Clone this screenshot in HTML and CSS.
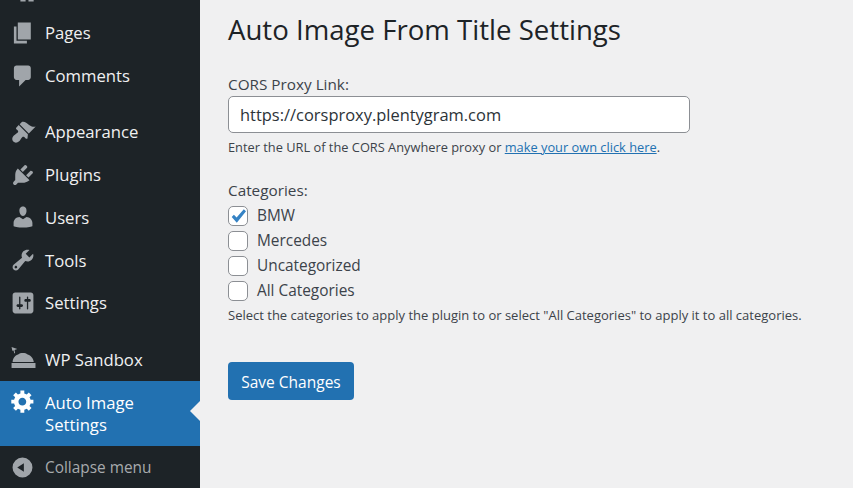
FILE: index.html
```html
<!DOCTYPE html>
<html lang="en">
<head>
    <meta charset="UTF-8">
    <meta name="viewport" content="width=device-width, initial-scale=1.0">
    <link rel="stylesheet" href="styles.css">
    <title>Auto Image From Title Settings</title>
</head>
<body>
    <nav class="sidebar">
        <ul class="menu">
            <li class="item">
                <svg class="icon" viewBox="0 0 20 20"><path d="M8 14h4v4.800H8zM14.200 14h4v4.800h-4z"/></svg>
            </li>
            <li class="item">
                <svg class="icon" viewBox="0 0 20 20"><path d="M6 15V2h10v13H6zm-1 1h8v2H3V5h2v11z"/></svg>
                <span>Pages</span>
            </li>
            <li class="item">
                <svg class="icon" viewBox="0 0 20 20"><path d="M5 2h9c1.100 0 2 .9 2 2v7c0 1.100-.9 2-2 2h-2l-5 5v-5H5c-1.100 0-2-.9-2-2V4c0-1.100.9-2 2-2z"/></svg>
                <span>Comments</span>
            </li>
        </ul>
        <ul class="menu">
            <li class="item">
                <svg class="icon" viewBox="0 0 20 20"><path d="M14.480 11.060L7.410 3.990l1.500-1.500c.5-.56 2.300-.47 3.510.32 1.210.8 1.430 1.280 2.910 2.100 1.180.64 2.450 1.260 4.450.85zm-.71.71L6.700 4.700 4.930 6.470c-.39.39-.39 1.020 0 1.410l1.060 1.060c.39.39.39 1.030 0 1.420-.6.6-1.430 1.110-2.210 1.690-.35.26-.7.53-1.010.84-1.350 1.360-1.380 3.370-.24 4.500 1.130 1.130 3.140 1.100 4.500-.25.31-.31.58-.66.84-1.010.58-.78 1.090-1.610 1.690-2.210.39-.39 1.030-.39 1.420 0l1.060 1.060c.39.39 1.020.39 1.410 0z"/></svg>
                <span>Appearance</span>
            </li>
            <li class="item">
                <svg class="icon" viewBox="0 0 20 20"><path d="M13.110 4.360L9.870 7.600 8 5.730l3.240-3.240c.35-.34 1.050-.2 1.560.32.52.51.66 1.210.31 1.550zm-8 1.770l.91-1.120 9.010 9.010-1.190.84c-.71.71-2.630 1.160-3.820 1.160H6.140L4.900 17.260c-.59.59-1.540.59-2.120 0-.59-.58-.59-1.530 0-2.120l1.240-1.240v-3.880c0-1.130.4-3.190 1.090-3.890zm7.260 3.970l3.240-3.240c.34-.35 1.040-.21 1.550.31.52.51.66 1.210.31 1.550l-3.240 3.250z"/></svg>
                <span>Plugins</span>
            </li>
            <li class="item">
                <svg class="icon" viewBox="0 0 20 20"><path d="M10 9.250c-2.270 0-2.730-3.440-2.730-3.440C7 4.020 7.820 2 9.970 2c2.160 0 2.980 2.020 2.710 3.810 0 0-.41 3.440-2.680 3.440zm0 2.570L12.720 10c2.390 0 4.520 2.330 4.520 4.530v2.490s-3.650 1.130-7.240 1.130c-3.650 0-7.240-1.130-7.240-1.130v-2.490c0-2.250 1.940-4.480 4.470-4.480z"/></svg>
                <span>Users</span>
            </li>
            <li class="item">
                <svg class="icon" viewBox="0 0 20 20"><path d="M16.680 9.770c-1.340 1.340-3.300 1.670-4.950.99l-5.410 6.520c-.99.99-2.590.99-3.580 0s-.99-2.590 0-3.570l6.520-5.420c-.68-1.650-.35-3.610.99-4.950 1.280-1.280 3.120-1.620 4.720-1.060l-2.890 2.890 2.820 2.820 2.860-2.870c.53 1.580.18 3.390-1.080 4.650zM3.810 16.210c.4.39 1.040.39 1.430 0 .4-.4.4-1.040 0-1.430-.39-.4-1.030-.4-1.430 0-.39.39-.39 1.030 0 1.430z"/></svg>
                <span>Tools</span>
            </li>
            <li class="item">
                <svg class="icon" viewBox="0 0 20 20"><path d="M18 16V4c0-1.100-.9-2-2-2H4c-1.100 0-2 .9-2 2v12c0 1.100.9 2 2 2h12c1.100 0 2-.9 2-2zM8 11h1c.55 0 1 .45 1 1s-.45 1-1 1H8v1.500c0 .28-.22.5-.5.5s-.5-.22-.5-.5V13H6c-.55 0-1-.45-1-1s.45-1 1-1h1V5.500c0-.28.22-.5.5-.5s.5.22.5.5V11zm5-2h-1c-.55 0-1-.45-1-1s.45-1 1-1h1V5.500c0-.28.22-.5.5-.5s.5.22.5.5V7h1c.55 0 1 .45 1 1s-.45 1-1 1h-1v5.500c0 .28-.22.5-.5.5s-.5-.22-.5-.5V9z"/></svg>
                <span>Settings</span>
            </li>
        </ul>
        <ul class="menu menu-last">
            <li class="item">
                <svg class="icon" viewBox="0 0 20 20"><path d="M1.200 0L5.600 1.500 3.500 2.300 3.900 4.800H3.200L2.800 2.700 1.800 2.900zM2 11.500C2.200 8.600 4.100 6.300 6.600 5.600 7.400 4.300 12.400 4.300 13.200 5.600 15.700 6.300 18 8.600 18.300 11.500zM1.200 12.300H19.600V16.200H1.200z"/></svg>
                <span>WP Sandbox</span>
            </li>
            <li class="item active">
                <svg class="icon" viewBox="0 0 20 20"><path d="M18 12h-2.180c-.17.7-.44 1.350-.81 1.930l1.540 1.540-2.100 2.100-1.540-1.540c-.58.36-1.230.63-1.910.79V19H8v-2.180c-.68-.16-1.330-.43-1.910-.79l-1.540 1.540-2.120-2.120 1.540-1.540c-.36-.58-.63-1.230-.79-1.910H1V9.030h2.170c.16-.7.44-1.350.8-1.940L2.430 5.550l2.100-2.100 1.540 1.540c.58-.37 1.240-.64 1.930-.81V2h3v2.180c.68.16 1.330.43 1.910.79l1.540-1.540 2.120 2.120-1.540 1.540c.36.59.64 1.240.8 1.940H18V12zm-8.500 1.500c1.660 0 3-1.340 3-3s-1.340-3-3-3-3 1.340-3 3 1.340 3 3 3z"/></svg>
                <span>Auto Image<br>Settings</span>
            </li>
            <li class="item collapse">
                <svg class="icon" viewBox="0 0 20 20"><path fill-rule="evenodd" d="M10 .5a9.500 9.500 0 1 0 0 19 9.500 9.500 0 0 0 0-19zM11.300 6L5 10l6.300 4z"/></svg>
                <span>Collapse menu</span>
            </li>
        </ul>
    </nav>

    <main class="content">
        <h1>Auto Image From Title Settings</h1>

        <form>
            <label class="field-label" for="proxy">CORS Proxy Link:</label>
            <input class="text-input" type="text" id="proxy" value="https://corsproxy.plentygram.com">
            <p class="hint hint-proxy">Enter the URL of the CORS Anywhere proxy or <a href="#">make your own click here</a>.</p>

            <div class="field-label categories-label">Categories:</div>
            <label class="check"><span class="box"><svg viewBox="0 0 20 20"><path d="M15.800 3.300L18 5.200 8.800 16.700 3.700 11 5.900 8.800 8.600 11.500z"/></svg></span>BMW</label>
            <label class="check"><span class="box"></span>Mercedes</label>
            <label class="check"><span class="box"></span>Uncategorized</label>
            <label class="check"><span class="box"></span>All Categories</label>
            <p class="hint hint-categories">Select the categories to apply the plugin to or select "All Categories" to apply it to all categories.</p>

            <button type="button" class="save">Save Changes</button>
        </form>
    </main>
</body>
</html>
```

FILE: styles.css
```css
body {
  font-family: 'Open Sans', 'Noto Sans', Arial, sans-serif;
  margin: 0;
  background-color: #f0f0f1;
  color: #3c434a;
  display: flex;
  height: 488px;
  overflow: hidden;
}

/* Sidebar */
.sidebar {
  width: 200px;
  flex: none;
  background-color: #1d2327;
  color: #f0f0f1;
  font-size: 16.7px;
  margin-top: -31.25px;
}

.menu {
  list-style: none;
  margin: 0 0 13.4px;
  padding: 0;
}

.menu-last {
  margin: 14.4px 0 0;
}

.item {
  display: flex;
  align-items: center;
  height: 42.75px;
  padding-left: 9.5px;
  position: relative;
}

.icon {
  width: 26px;
  height: 26px;
  flex: none;
  margin-right: 9.5px;
  fill: #a0a5aa;
}

.active {
  height: 65px;
  background-color: #2271b1;
  color: #ffffff;
  line-height: 22px;
}

.active .icon {
  fill: #ffffff;
  align-self: flex-start;
  margin-top: 7px;
}

/* little notch pointing at the content */
.active::after {
  content: "";
  position: absolute;
  right: 0;
  top: 20px;
  border: 10.5px solid transparent;
  border-right-color: #f0f0f1;
  border-left-width: 0;
}

.collapse {
  color: #a7aaad;
  font-size: 15.4px;
}

.collapse .icon {
  width: 21px;
  height: 21px;
  margin-left: 2.7px;
  margin-right: 11.8px;
}

/* Content */
.content {
  flex: 1;
  padding: 0 28px;
}

h1 {
  font-size: 27.6px;
  font-weight: 400;
  color: #1d2327;
  line-height: 38px;
  margin: 10px 0 26px;
}

.field-label {
  display: block;
  font-size: 15.3px;
  line-height: 20px;
}

.text-input {
  display: block;
  box-sizing: border-box;
  width: 462px;
  height: 37px;
  margin: 2px 0 0;
  padding: 0 11px;
  font-family: inherit;
  font-size: 16.45px;
  color: #2c3338;
  background: #ffffff;
  border: 1px solid #8c8f94;
  border-radius: 5px;
  outline: none;
}

.hint {
  font-size: 13px;
  line-height: 18px;
  margin: 5px 0 0;
}

.hint-proxy {
  font-size: 12.82px;
}

.hint-categories {
  margin-top: 3px;
}

.hint a {
  color: #2271b1;
}

.categories-label {
  margin: 24px 0 3px;
}

.check {
  display: flex;
  align-items: center;
  gap: 9px;
  height: 25px;
  font-size: 15.4px;
}

.box {
  box-sizing: border-box;
  width: 20px;
  height: 20px;
  background: #ffffff;
  border: 1px solid #8c8f94;
  border-radius: 5px;
}

.box svg {
  display: block;
  width: 20px;
  height: 20px;
  margin: -1px;
  fill: #3582c4;
}

.save {
  display: block;
  width: 126px;
  height: 38px;
  margin-top: 38px;
  padding: 1px 0 0;
  font-family: inherit;
  font-size: 15.5px;
  color: #ffffff;
  background-color: #2271b1;
  border: none;
  border-radius: 4px;
  cursor: pointer;
}
```
